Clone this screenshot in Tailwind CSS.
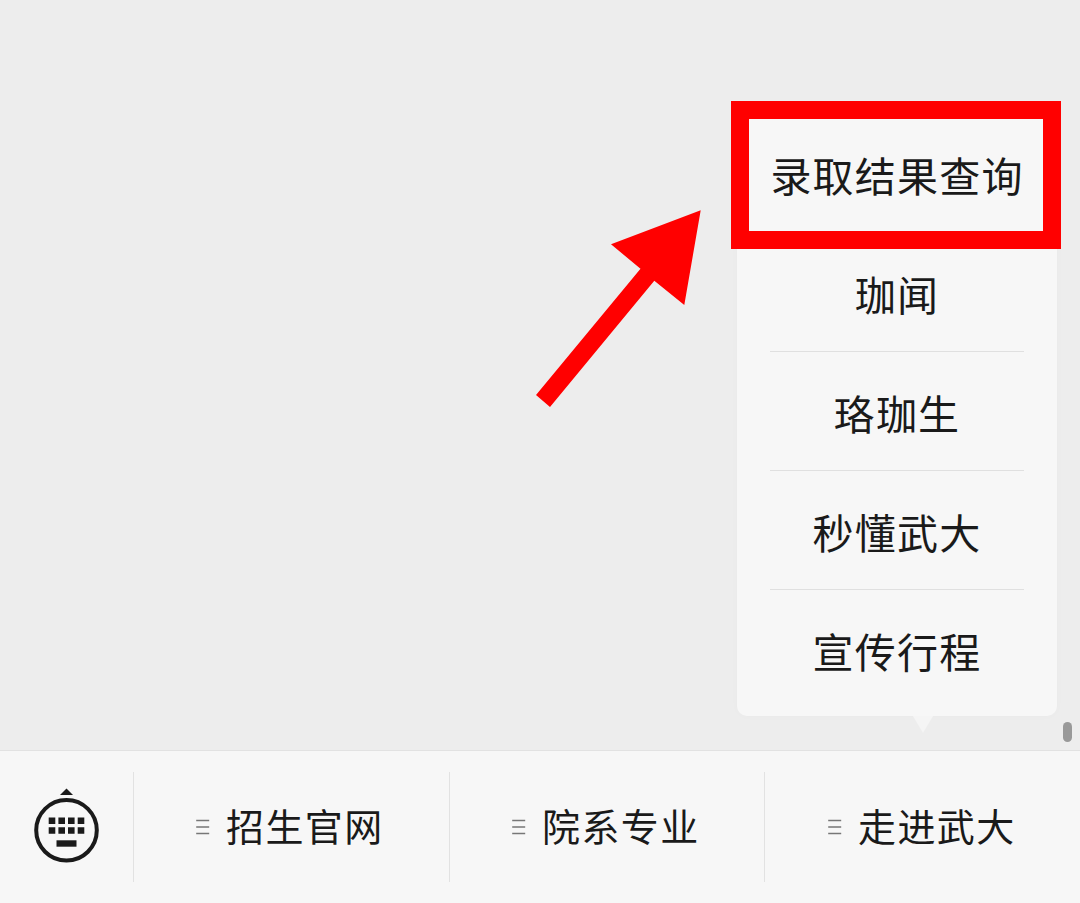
<!DOCTYPE html>
<html lang="zh-CN">
<head>
  <meta charset="UTF-8" />
  <meta name="viewport" content="width=device-width, initial-scale=1.0"/>
  <title>招生公众号菜单</title>
  <script src="https://cdn.jsdelivr.net/npm/@tailwindcss/browser@4"></script>
  <style>
    body {
      font-family: 'Noto Sans CJK SC', sans-serif;
    }
  </style>
</head>
<body class="bg-[#ededed] text-[#1a1a1a] overflow-hidden">

  <div class="flex flex-col w-[1080px] h-[903px]">

    <!-- chat area -->
    <main class="relative flex-1">

      <!-- submenu -->
      <div class="absolute left-[737px] top-[106px] w-[320px] h-[610px] rounded-[10px] bg-[#f7f7f7] px-[33px] pt-[7px] shadow-[0_0_8px_rgba(0,0,0,0.02)]">
        <ul class="text-[41px] leading-[60px] tracking-[1.2px] text-center whitespace-nowrap">
          <li class="h-[119px] pt-[31px]">录取结果查询</li>
          <li class="h-[120px] pt-[31px] border-b border-[#e0e0e0]">珈闻</li>
          <li class="h-[119px] pt-[30px] border-b border-[#e0e0e0]">珞珈生</li>
          <li class="h-[119px] pt-[30px] border-b border-[#e0e0e0]">秒懂武大</li>
          <li class="h-[119px] pt-[30px]">宣传行程</li>
        </ul>
        <svg class="absolute left-[176px] top-[610px]" width="20" height="17" viewBox="0 0 20 17">
          <path d="M0 0h20L10 17z" fill="#f5f5f5"/>
        </svg>
      </div>

      <!-- highlight frame -->
      <div class="absolute left-[731px] top-[101px] w-[330px] h-[148px] border-[18px] border-[#ff0000]"></div>

      <!-- arrow -->
      <svg class="absolute left-[530px] top-[205px]" width="180" height="210" viewBox="530 205 180 210">
        <path d="M700.7 210.3L684.3 305L654.3 280.7L550 407L536 395L640.5 268.7L611 244.3z" fill="#ff0000"/>
      </svg>

      <!-- scrollbar -->
      <div class="absolute left-[1063px] top-[722px] w-[9px] h-[20px] rounded-full bg-[#999999]"></div>
    </main>

    <!-- bottom bar -->
    <footer class="flex h-[153px] bg-[#f7f7f7] border-t border-[#e2e2e2] pt-[21px] text-[38px] leading-[56px] tracking-[1.4px] whitespace-nowrap">
      <button class="flex items-start w-[134px] h-[110px] border-r border-[#e2e2e2] pl-[32px] pt-[14px]">
        <svg width="68" height="80" viewBox="32 786 68 80" fill="#1a1a1a">
          <path d="M66.5 788.5L73 795H60z"/>
          <circle cx="66.5" cy="830.3" r="30.3" fill="none" stroke="#1a1a1a" stroke-width="4"/>
          <path d="M48.7 817.5h6.6v6.5h-6.6zM58.4 817.5h6.6v6.5h-6.6zM68 817.5h6.6v6.5h-6.6zM77.7 817.5h6.6v6.5h-6.6z"/>
          <path d="M48.7 827.3h6.6v6.5h-6.6zM58.4 827.3h6.6v6.5h-6.6zM68 827.3h6.6v6.5h-6.6zM77.7 827.3h6.6v6.5h-6.6z"/>
          <path d="M56.5 840.3h20v6.4h-20z"/>
        </svg>
      </button>
      <a class="flex items-center w-[316px] h-[110px] border-r border-[#e2e2e2] pl-[62px]">
        <svg class="mr-[16px]" width="14" height="16" viewBox="0 0 14 16" stroke="#777777" stroke-width="1.6">
          <path d="M.2 1.5h13M.2 8h13M.2 14.5h13"/>
        </svg>
        <span class="pb-[4px]">招生官网</span>
      </a>
      <a class="flex items-center w-[315px] h-[110px] border-r border-[#e2e2e2] pl-[62px]">
        <svg class="mr-[16px]" width="14" height="16" viewBox="0 0 14 16" stroke="#777777" stroke-width="1.6">
          <path d="M.2 1.5h13M.2 8h13M.2 14.5h13"/>
        </svg>
        <span class="pb-[4px]">院系专业</span>
      </a>
      <a class="flex items-center w-[315px] h-[110px] pl-[63px]">
        <svg class="mr-[16px]" width="14" height="16" viewBox="0 0 14 16" stroke="#777777" stroke-width="1.6">
          <path d="M.2 1.5h13M.2 8h13M.2 14.5h13"/>
        </svg>
        <span class="pb-[4px]">走进武大</span>
      </a>
    </footer>

  </div>

</body>
</html>
